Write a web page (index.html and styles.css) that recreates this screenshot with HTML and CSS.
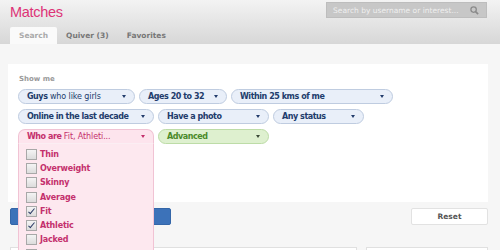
FILE: index.html
```html
<!DOCTYPE html>
<html lang="en">
<head>
  <meta charset="UTF-8" />
  <meta name="viewport" content="width=device-width, initial-scale=1.0"/>
  <title>Matches</title>
  <link rel="stylesheet" href="styles.css">
</head>
<body>
  <div class="header">
    <div class="top">
      <h1 class="title">Matches</h1>
      <div class="search">
        <span>Search by username or interest...</span>
        <svg width="9" height="9" viewBox="0 0 10 10">
          <circle cx="4" cy="4" r="3" fill="none" stroke="#8a8a8a" stroke-width="1.4"/>
          <line x1="6.2" y1="6.2" x2="9" y2="9" stroke="#8a8a8a" stroke-width="1.8"/>
        </svg>
      </div>
    </div>
    <div class="tabs">
      <div class="tab active">Search</div>
      <div class="tab">Quiver (3)</div>
      <div class="tab">Favorites</div>
    </div>
  </div>

  <div class="content">
    <div class="panel">
      <div class="label">Show me</div>
      <div class="row">
        <div class="pill w117"><span><b>Guys</b> who like girls</span><i class="arrow"></i></div>
        <div class="pill w88"><span><b>Ages 20 to 32</b></span><i class="arrow"></i></div>
        <div class="pill w162"><span><b>Within 25 kms of me</b></span><i class="arrow"></i></div>
      </div>
      <div class="row">
        <div class="pill w136"><span><b>Online in the last decade</b></span><i class="arrow"></i></div>
        <div class="pill w111"><span><b>Have a photo</b></span><i class="arrow"></i></div>
        <div class="pill w91"><span><b>Any status</b></span><i class="arrow"></i></div>
      </div>
      <div class="row">
        <div class="pill pink open w136">
          <span><b>Who are</b> Fit, Athleti...</span><i class="arrow"></i>
          <ul class="dropdown">
            <li><i class="box"></i>Thin</li>
            <li><i class="box"></i>Overweight</li>
            <li><i class="box"></i>Skinny</li>
            <li><i class="box"></i>Average</li>
            <li><i class="box checked"></i>Fit</li>
            <li><i class="box checked"></i>Athletic</li>
            <li><i class="box"></i>Jacked</li>
            <li><i class="box"></i></li>
          </ul>
        </div>
        <div class="pill green w111"><span><b>Advanced</b></span><i class="arrow"></i></div>
      </div>
    </div>

    <div class="actions">
      <button class="go"></button>
      <button class="reset">Reset</button>
    </div>

    <div class="results">
      <div class="result wide"></div>
      <div class="result"></div>
    </div>
  </div>
</body>
</html>
```

FILE: styles.css
```css
body {
  margin: 0;
  font-family: "DejaVu Sans", Verdana, sans-serif;
  background: #f6f6f6;
  overflow: hidden;
}
.header {
  height: 44px;
  background: linear-gradient(#f3f3f3, #d7d7d7);
  display: flex;
  flex-direction: column;
}
.top {
  height: 27px;
  display: flex;
  justify-content: space-between;
  align-items: flex-start;
  padding: 0 13px 0 10px;
}
.title {
  margin: 4px 0 0;
  font-family: "Liberation Sans", Arial, sans-serif;
  font-weight: normal;
  font-size: 14.5px;
  line-height: 16px;
  letter-spacing: -0.3px;
  color: #dd3377;
}
.search {
  margin-top: 2px;
  width: 161px;
  height: 16px;
  box-sizing: border-box;
  background: #c7c7c7;
  border: 1px solid #bdbdbd;
  display: flex;
  align-items: center;
  justify-content: space-between;
  padding: 0 7px 0 6px;
  font-size: 7.5px;
  color: #efefef;
}
.tabs {
  display: flex;
  padding-left: 10px;
  height: 17px;
}
.tab {
  padding: 0 9px;
  font-size: 7.5px;
  font-weight: bold;
  color: #777;
  line-height: 18px;
}
.tab.active {
  background: #fafafa;
  color: #a9a9a9;
  border-radius: 2px 2px 0 0;
}
.content {
  padding-top: 20px;
}
.panel {
  margin: 0 12px 0 8px;
  height: 138px;
  box-sizing: border-box;
  background: #fff;
  padding: 10px 10px;
}
.label {
  font-size: 7px;
  font-weight: bold;
  color: #9a9a9a;
  line-height: 10px;
  margin: 0 0 5px 1px;
}
.row {
  display: flex;
  gap: 4px;
  margin-bottom: 5px;
}
.pill {
  position: relative;
  height: 15px;
  box-sizing: border-box;
  border: 1px solid #bfcce0;
  border-radius: 8px;
  background: #e9eff9;
  color: #223c6c;
  font-size: 8px;
  letter-spacing: -0.1px;
  display: flex;
  align-items: center;
  justify-content: space-between;
  padding: 0 8px;
}
.pill b {
  font-weight: bold;
  letter-spacing: -0.45px;
}
.arrow {
  width: 0;
  height: 0;
  border-left: 2.5px solid transparent;
  border-right: 2.5px solid transparent;
  border-top: 3px solid #223c6c;
}
.w117 { width: 117px; }
.w88 { width: 88px; }
.w162 { width: 162px; }
.w136 { width: 136px; }
.w111 { width: 111px; }
.w91 { width: 91px; }
.pink {
  background: #fde4ed;
  border-color: #f1c3d4;
  color: #c4306c;
}
.pink .arrow {
  border-top-color: #c4306c;
}
.pink.open {
  border-radius: 7px 7px 0 0;
  border-bottom: 1px solid #fbeef3;
}
.green {
  background: #def0cf;
  border-color: #bddca7;
  color: #4b8a2a;
}
.green .arrow {
  border-top-color: #3c4a36;
}
.dropdown {
  position: absolute;
  left: -1px;
  top: 14px;
  width: 136px;
  box-sizing: border-box;
  margin: 0;
  padding: 3px 0 0 7px;
  list-style: none;
  background: #fde8ef;
  border: 1px solid #f1c3d4;
  border-top: none;
  z-index: 2;
}
.dropdown li {
  height: 14.3px;
  display: flex;
  align-items: center;
  gap: 3px;
  font-size: 8px;
  letter-spacing: -0.2px;
  font-weight: bold;
  color: #c4306c;
}
.box {
  width: 9px;
  height: 9px;
  border: 1px solid #a8a8a8;
  background: linear-gradient(#f4f4f4, #dcdcdc);
  position: relative;
}
.box.checked::after {
  content: "";
  position: absolute;
  left: 3px;
  top: 0;
  width: 2px;
  height: 6px;
  border-right: 1.3px solid #2b3b66;
  border-bottom: 1.3px solid #2b3b66;
  transform: rotate(40deg);
}
.actions {
  display: flex;
  justify-content: space-between;
  margin: 6px 12px 0 10px;
}
.actions button {
  height: 17px;
  font-family: inherit;
  font-size: 7.5px;
  font-weight: bold;
  border-radius: 2px;
  padding: 0;
}
.go {
  width: 161px;
  background: #3c72b9;
  border: 1px solid #3466a8;
  color: #fff;
}
.reset {
  width: 77px;
  background: #fff;
  border: 1px solid #e2e2e2;
  color: #555;
}
.results {
  display: flex;
  gap: 9px;
  margin: 22px 12px 0 10px;
}
.result {
  flex: 1;
  height: 20px;
  background: #fff;
  border: 1px solid #e0e0e0;
}
.result.wide {
  flex: 0 0 345px;
}
```
